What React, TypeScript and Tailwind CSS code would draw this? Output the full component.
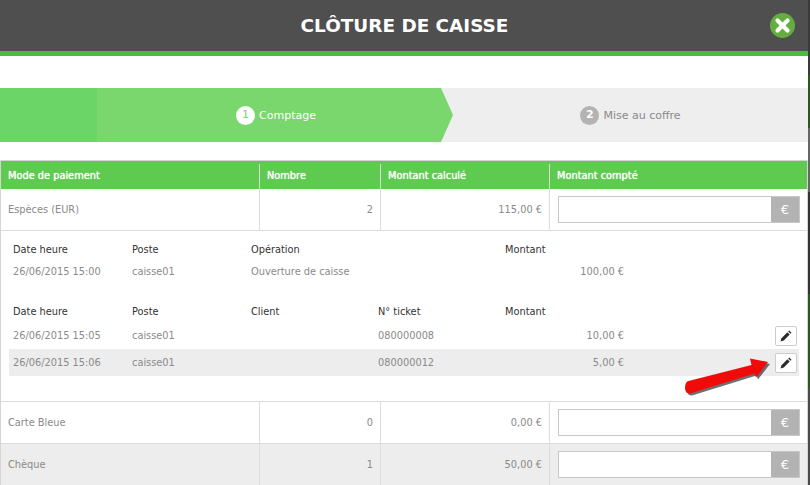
const font = "font-['DejaVu_Sans',sans-serif]";

function MoneyInput() {
    return (
        <div className="flex h-[27px] w-[242px] border border-[#c8c8c8] bg-white">
            <div className="flex-1" />
            <div className="flex w-[28px] items-center justify-center bg-[#b3b3b3] text-[13px] text-white">€</div>
        </div>
    );
}

function PencilIcon() {
    return (
        <svg viewBox="0 0 12 12" className="h-[12px] w-[12px]">
            <path d="M0.5 11.5 L1.5 8.2 L7.4 2.3 L9.7 4.6 L3.8 10.500 Z" fill="#2b2b2b" />
            <path d="M8.2 1.500 L9.3 0.500 L11.500 2.700 L10.500 3.800 Z" fill="#2b2b2b" />
        </svg>
    );
}

function PayRow({ label, count, amount, grey }: { label: string; count: string; amount: string; grey?: boolean }) {
    return (
        <div className={`grid h-[42px] grid-cols-[258px_121px_169px_1fr] border-b border-[#dcdcdc] text-[9.8px] text-[#8a8a8a] ${grey ? "bg-[#ededed]" : "bg-white"}`}>
            <div className="flex items-center pt-[2px] pl-[7px]">{label}</div>
            <div className="flex items-center justify-end border-l border-[#dcdcdc] pt-[2px] pr-[7px]">{count}</div>
            <div className="flex items-center justify-end border-l border-[#dcdcdc] pt-[2px] pr-[7px]">{amount}</div>
            <div className="flex items-center border-l border-[#dcdcdc] pl-[8px]">
                <MoneyInput />
            </div>
        </div>
    );
}

function DetailRow({ cells, amount, head, grey, edit, h }: { cells: string[]; amount: string; head?: boolean; grey?: boolean; edit?: boolean; h: string }) {
    return (
        <div className={`grid grid-cols-[119px_119px_127px_127px_119px_1fr] items-center pl-[4px] text-[9.8px] ${h} ${head ? "pt-[1px] text-[#333333]" : "text-[#8a8a8a]"} ${grey ? "bg-[#ededed]" : ""}`}>
            {cells.map((c, i) => (
                <div key={i} className="pt-[2px]">{c}</div>
            ))}
            <div className={head ? "pt-[2px]" : "pt-[2px] text-right"}>{amount}</div>
            <div className="flex justify-end pr-[2px]">
                {edit && (
                    <button type="button" className="mt-[1px] flex h-[20px] w-[22px] items-center justify-center rounded-[2px] border border-[#cccccc] bg-white">
                        <PencilIcon />
                    </button>
                )}
            </div>
        </div>
    );
}

export default function App() {
    return (
        <div className={`flex h-[485px] w-[810px] overflow-hidden ${font}`}>
            <div className="relative h-[485px] w-[808px] overflow-hidden bg-white">
                <header className="flex h-[56px] items-center justify-center border-b-[5px] border-[#4cbb3f] bg-[#4f4f4f] pl-[1px]">
                    <h1 className="text-[18.4px] font-bold text-white">CLÔTURE DE CAISSE</h1>
                    <button type="button" aria-label="Fermer" className="absolute top-[13px] left-[770px] h-[25px] w-[25px]">
                        <svg viewBox="0 0 25 25" className="h-[25px] w-[25px]">
                            <circle cx="12.5" cy="12.5" r="12.5" fill="#65ad41" />
                            <path d="M7.5 7.5 L17.5 17.5 M17.5 7.5 L7.5 17.5" stroke="#ffffff" strokeWidth="4.2" strokeLinecap="round" />
                        </svg>
                    </button>
                </header>

                <div className="mt-[32px] flex h-[54px] bg-[#eeeeee] text-[11px]">
                    <div className="w-[97px] bg-[#6bd567]" />
                    <div className="flex w-[356px] items-center justify-center gap-[4px] bg-[#79d76d] pl-[2px] text-white [clip-path:polygon(0_0,344px_0,100%_50%,344px_100%,0_100%)]">
                        <span className="flex h-[19px] w-[19px] items-center justify-center rounded-full bg-white text-[#79d76d]">1</span>
                        <span className="pt-[3px]">Comptage</span>
                    </div>
                    <div className="flex flex-1 items-center justify-center gap-[4px] text-[#8a8a8a]">
                        <span className="flex h-[19px] w-[19px] items-center justify-center rounded-full bg-[#b3b3b3] font-bold text-white">2</span>
                        <span className="pt-[3px]">Mise au coffre</span>
                    </div>
                </div>

                <div className="mt-[18px] border-x border-t border-[#d5d5d5]">
                    <div className="grid h-[28px] grid-cols-[258px_121px_169px_1fr] bg-[#5eca50] pt-[3px] text-[9.8px] text-white [text-shadow:0_0_1px_#ffffff]">
                        <div className="flex items-center pl-[7px]">Mode de paiement</div>
                        <div className="flex items-center border-l border-[#dcdcdc] pl-[7px]">Nombre</div>
                        <div className="flex items-center border-l border-[#dcdcdc] pl-[7px]">Montant calculé</div>
                        <div className="flex items-center border-l border-[#dcdcdc] pl-[7px]">Montant compté</div>
                    </div>
                    <PayRow label="Espèces (EUR)" count="2" amount="115,00 €" />
                    <div className="h-[171px] border-b border-[#dcdcdc] px-[8px] pt-[7px]">
                        <DetailRow head h="h-[22px]" cells={["Date heure", "Poste", "Opération", ""]} amount="Montant" />
                        <DetailRow h="h-[22px]" cells={["26/06/2015 15:00", "caisse01", "Ouverture de caisse", ""]} amount="100,00 €" />
                        <div className="h-[18px]" />
                        <DetailRow head h="h-[22px]" cells={["Date heure", "Poste", "Client", "N° ticket"]} amount="Montant" />
                        <DetailRow edit h="h-[27px]" cells={["26/06/2015 15:05", "caisse01", "", "080000008"]} amount="10,00 €" />
                        <DetailRow edit grey h="h-[27px]" cells={["26/06/2015 15:06", "caisse01", "", "080000012"]} amount="5,00 €" />
                    </div>
                    <PayRow label="Carte Bleue" count="0" amount="0,00 €" />
                    <PayRow grey label="Chèque" count="1" amount="50,00 €" />
                </div>

                <svg viewBox="0 0 100 50" className="absolute top-[350px] left-[680px] h-[50px] w-[100px]">
                    <path d="M8.500 31 L71.500 15 L70 8.500 L88 12 L76 27.500 L74.500 23.500 L10 43.500 Q5 43.500 5 38 Q5 32 8.500 31 Z" fill="#222222" opacity="0.65" transform="translate(2 2)" />
                    <path d="M8.500 31 L71.500 15 L70 8.500 L88 12 L76 27.500 L74.500 23.500 L10 43.500 Q5 43.500 5 38 Q5 32 8.500 31 Z" fill="#f00a0a" />
                </svg>
            </div>

            {/* bout de la page derriere la modale */}
            <div className="flex w-[2px] flex-col">
                <div className="h-[75px] bg-[#3a3a3a]" />
                <div className="h-[53px] bg-[#2a5a1a]" />
                <div className="h-[64px] bg-[#666666]" />
                <div className="h-[102px] bg-[#333333]" />
                <div className="h-[94px] bg-[#2a5a1a]" />
                <div className="flex-1 bg-[#4a4a4a]" />
            </div>
        </div>
    );
}
